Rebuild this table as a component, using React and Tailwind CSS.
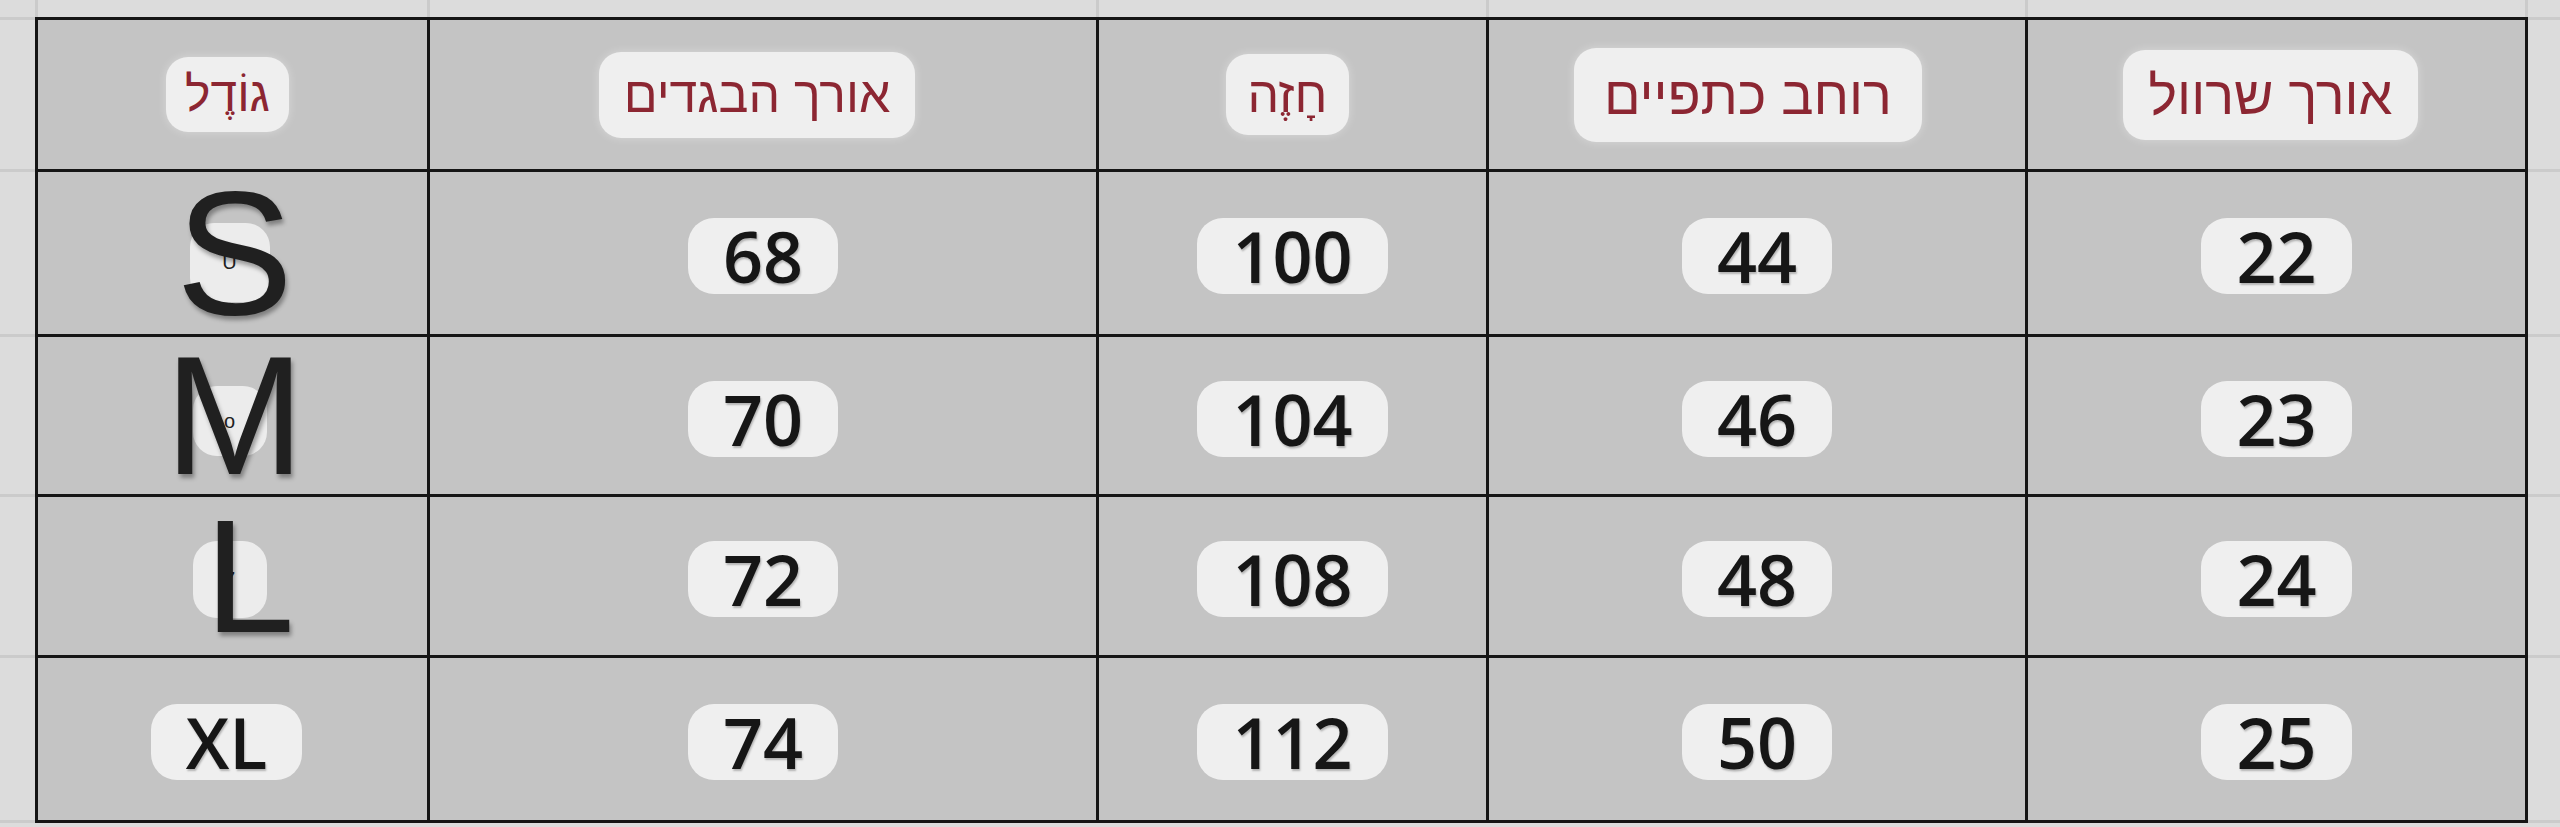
import React from 'react';

const rows = [
  { size: 'S', values: ['68', '100', '44', '22'] },
  { size: 'M', values: ['70', '104', '46', '23'] },
  { size: 'L', values: ['72', '108', '48', '24'] },
  { size: 'XL', values: ['74', '112', '50', '25'] },
];

function HeadPill({ children, className }) {
  return (
    <span
      dir="rtl"
      className={`flex items-center justify-center rounded-[22px] bg-[#efefef] font-['Liberation_Sans',sans-serif] leading-none text-[#8c2632] shadow-[0_0_10px_rgba(255,255,255,0.35)] ${className}`}
    >
      {children}
    </span>
  );
}

function NumPill({ children }) {
  return (
    <span className="flex h-[76px] items-center rounded-[26px] bg-[#efefef] px-[35px] font-['Open_Sans',sans-serif] text-[70px] font-semibold leading-none text-[#161616] [text-shadow:1px_2px_2px_rgba(0,0,0,0.25)]">
      {children}
    </span>
  );
}

function SizeCell({ size }) {
  if (size === 'XL') {
    return (
      <div className="flex items-center justify-center bg-[#c4c4c4] pt-[6px] pr-[12px]">
        <NumPill>XL</NumPill>
      </div>
    );
  }

  const pill = {
    S: 'w-[80px] h-[79px] mt-[18px]',
    M: 'w-[74px] h-[70px] mt-[10px]',
    L: 'w-[74px] h-[77px] mt-[6px]',
  }[size];
  const tiny = { S: 'U', M: 'o', L: '7' }[size];
  const letter = {
    S: 'text-[176px] pl-[4px]',
    M: 'text-[168px] pl-[4px]',
    L: 'text-[162px] pl-[34px]',
  }[size];

  return (
    <div className="relative flex items-center justify-center bg-[#c4c4c4] pr-[6px]">
      <span className={`flex items-center justify-center rounded-[24px] bg-[#ececec] font-['Liberation_Sans',sans-serif] text-[20px] leading-none text-[#222] ${pill}`}>
        {tiny}
      </span>
      <span
        className={`absolute inset-0 flex items-center justify-center font-['Liberation_Sans',sans-serif] leading-none text-[#202020] [text-shadow:2px_4px_4px_rgba(0,0,0,0.35)] ${letter}`}
      >
        {size}
      </span>
    </div>
  );
}

export default function App() {
  return (
    <div className="grid h-[827px] w-[2560px] grid-cols-[35px_2493px_1fr] grid-rows-[17px_806px_1fr] overflow-hidden bg-[#dcdcdc]">
      {/* corner */}
      <div />

      {/* sheet gridlines above the table */}
      <div className="grid grid-cols-[389px_666px_387px_536px_497px] gap-x-[3px] bg-[#cbcbcb] px-[3px]">
        <div className="bg-[#dcdcdc]" />
        <div className="bg-[#dcdcdc]" />
        <div className="bg-[#dcdcdc]" />
        <div className="bg-[#dcdcdc]" />
        <div className="bg-[#dcdcdc]" />
      </div>

      <div />

      {/* sheet gridlines left of the table */}
      <div className="grid grid-rows-[149px_162px_157px_158px_162px] gap-y-[3px] bg-[#cbcbcb] py-[3px]">
        <div className="bg-[#dcdcdc]" />
        <div className="bg-[#dcdcdc]" />
        <div className="bg-[#dcdcdc]" />
        <div className="bg-[#dcdcdc]" />
        <div className="bg-[#dcdcdc]" />
      </div>

      {/* the size table */}
      <div className="grid grid-cols-[389px_666px_387px_536px_497px] grid-rows-[149px_162px_157px_158px_162px] gap-[3px] border-[3px] border-[#151515] bg-[#151515]">
        <div className="flex items-center justify-center bg-[#c4c4c4] pr-[10px]">
          <HeadPill className="h-[75px] px-[19px] text-[48px]">גוֹדֶל</HeadPill>
        </div>
        <div className="flex items-center justify-center bg-[#c4c4c4] pr-[12px]">
          <HeadPill className="h-[86px] px-[25px] text-[50px]">אורך הבגדים</HeadPill>
        </div>
        <div className="flex items-center justify-center bg-[#c4c4c4] pr-[10px]">
          <HeadPill className="h-[81px] px-[22px] text-[50px]">חָזֶה</HeadPill>
        </div>
        <div className="flex items-center justify-center bg-[#c4c4c4] pr-[18px]">
          <HeadPill className="h-[94px] px-[30px] text-[54px]">רוחב כתפיים</HeadPill>
        </div>
        <div className="flex items-center justify-center bg-[#c4c4c4] pr-[12px]">
          <HeadPill className="h-[90px] px-[26px] text-[54px]">אורך שרוול</HeadPill>
        </div>

        {rows.map((row) => (
          <React.Fragment key={row.size}>
            <SizeCell size={row.size} />
            {row.values.map((v, i) => (
              <div key={i} className="flex items-center justify-center bg-[#c4c4c4] pt-[6px]">
                <NumPill>{v}</NumPill>
              </div>
            ))}
          </React.Fragment>
        ))}
      </div>

      {/* sheet gridlines right of the table */}
      <div className="grid grid-rows-[149px_162px_157px_158px_162px] gap-y-[3px] bg-[#cbcbcb] py-[3px]">
        <div className="bg-[#dcdcdc]" />
        <div className="bg-[#dcdcdc]" />
        <div className="bg-[#dcdcdc]" />
        <div className="bg-[#dcdcdc]" />
        <div className="bg-[#dcdcdc]" />
      </div>

      <div />
      <div />
      <div />
    </div>
  );
}
